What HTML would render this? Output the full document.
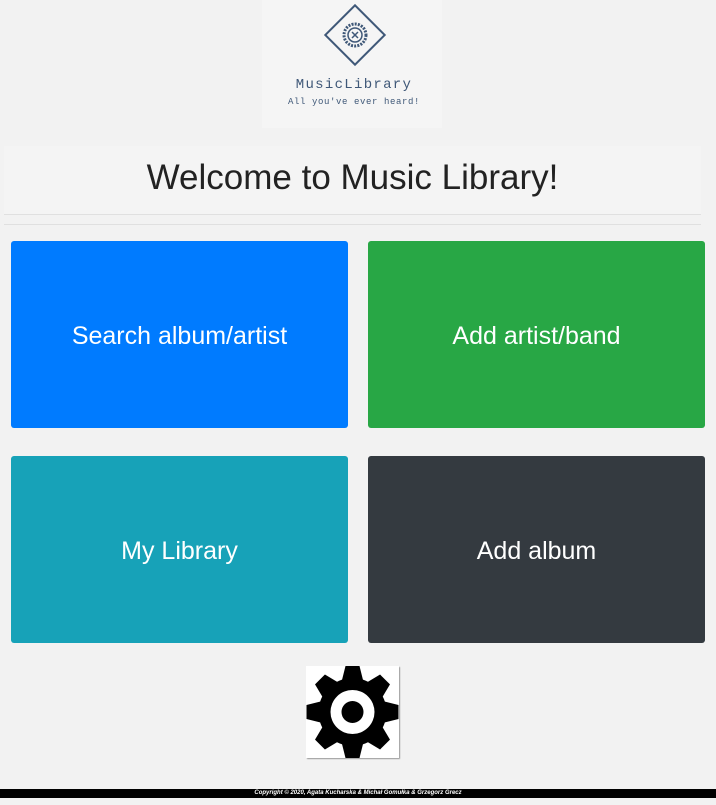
<!DOCTYPE html>
<html><head><style>
body{margin:0;background:#f2f2f2;font-family:"Liberation Sans",sans-serif;width:716px;height:805px;position:relative;overflow:hidden}
.logo{position:absolute;left:262px;top:0;width:180px;height:128px;background:#f5f5f5}
.hdr{position:absolute;left:4px;top:146px;width:697px;height:68px;background:#f4f4f4;border-bottom:1px solid #e0e0e0;text-align:center;font-size:35px;line-height:64px;color:#222}
.hr{position:absolute;left:4px;top:224px;width:697px;border-top:1px solid #e0e0e0}
.b{position:absolute;width:337px;height:187px;border-radius:3px;color:#fff;font-size:25px;display:flex;align-items:center;justify-content:center;box-sizing:border-box;padding-top:3px}
.gear{position:absolute;left:306px;top:666px;width:93px;height:92px;background:#fff;box-shadow:1px 1px 1px #999}
.foot{position:absolute;left:0;top:789px;width:716px;height:9px;background:#000;color:#fff;font-size:6px;font-style:italic;font-weight:bold;text-align:center;line-height:9px}
</style></head><body>
<div class="logo">
<svg width="180" height="128" style="position:absolute;left:0;top:0">
<rect x="72" y="14" width="42" height="42" transform="rotate(45 93 35)" fill="none" stroke="#3f5878" stroke-width="2"/>
<circle cx="93" cy="35" r="11" fill="none" stroke="#3f5878" stroke-width="3" stroke-dasharray="2 1.2"/>
<circle cx="93" cy="35" r="7" fill="none" stroke="#3f5878" stroke-width="1.5"/>
<path d="M90 32l6 6M96 32l-6 6" stroke="#3f5878" stroke-width="1.5"/>
<text x="92" y="88" text-anchor="middle" font-family="Liberation Mono" font-size="14" fill="#3f5878" letter-spacing="1.3">MusicLibrary</text>
<text x="92" y="104" text-anchor="middle" font-family="Liberation Mono" font-size="9" fill="#3f5878" letter-spacing="0.6">All you've ever heard!</text>
</svg></div>
<div class="hdr">Welcome to Music Library!</div>
<div class="hr"></div>
<div class="b" style="left:11px;top:241px;background:#007bff">Search album/artist</div>
<div class="b" style="left:368px;top:241px;background:#28a745">Add artist/band</div>
<div class="b" style="left:11px;top:456px;background:#17a2b8">My Library</div>
<div class="b" style="left:368px;top:456px;background:#343a40">Add album</div>
<div class="gear"><svg width="93" height="92" viewBox="0 0 93 92">
<defs><polygon id="t" points="-11,-30 11,-30 7,-46 -7,-46"/></defs>
<g transform="translate(46.5 46)" fill="#000">
<circle r="34"/>
<use href="#t"/><use href="#t" transform="rotate(45)"/><use href="#t" transform="rotate(90)"/><use href="#t" transform="rotate(135)"/>
<use href="#t" transform="rotate(180)"/><use href="#t" transform="rotate(225)"/><use href="#t" transform="rotate(270)"/><use href="#t" transform="rotate(315)"/>
<circle r="22" fill="#fff"/>
<circle r="11"/>
</g></svg></div>
<div class="foot">Copyright © 2020, Agata Kucharska &amp; Michał Gomułka &amp; Grzegorz Grecz</div>
</body></html>
